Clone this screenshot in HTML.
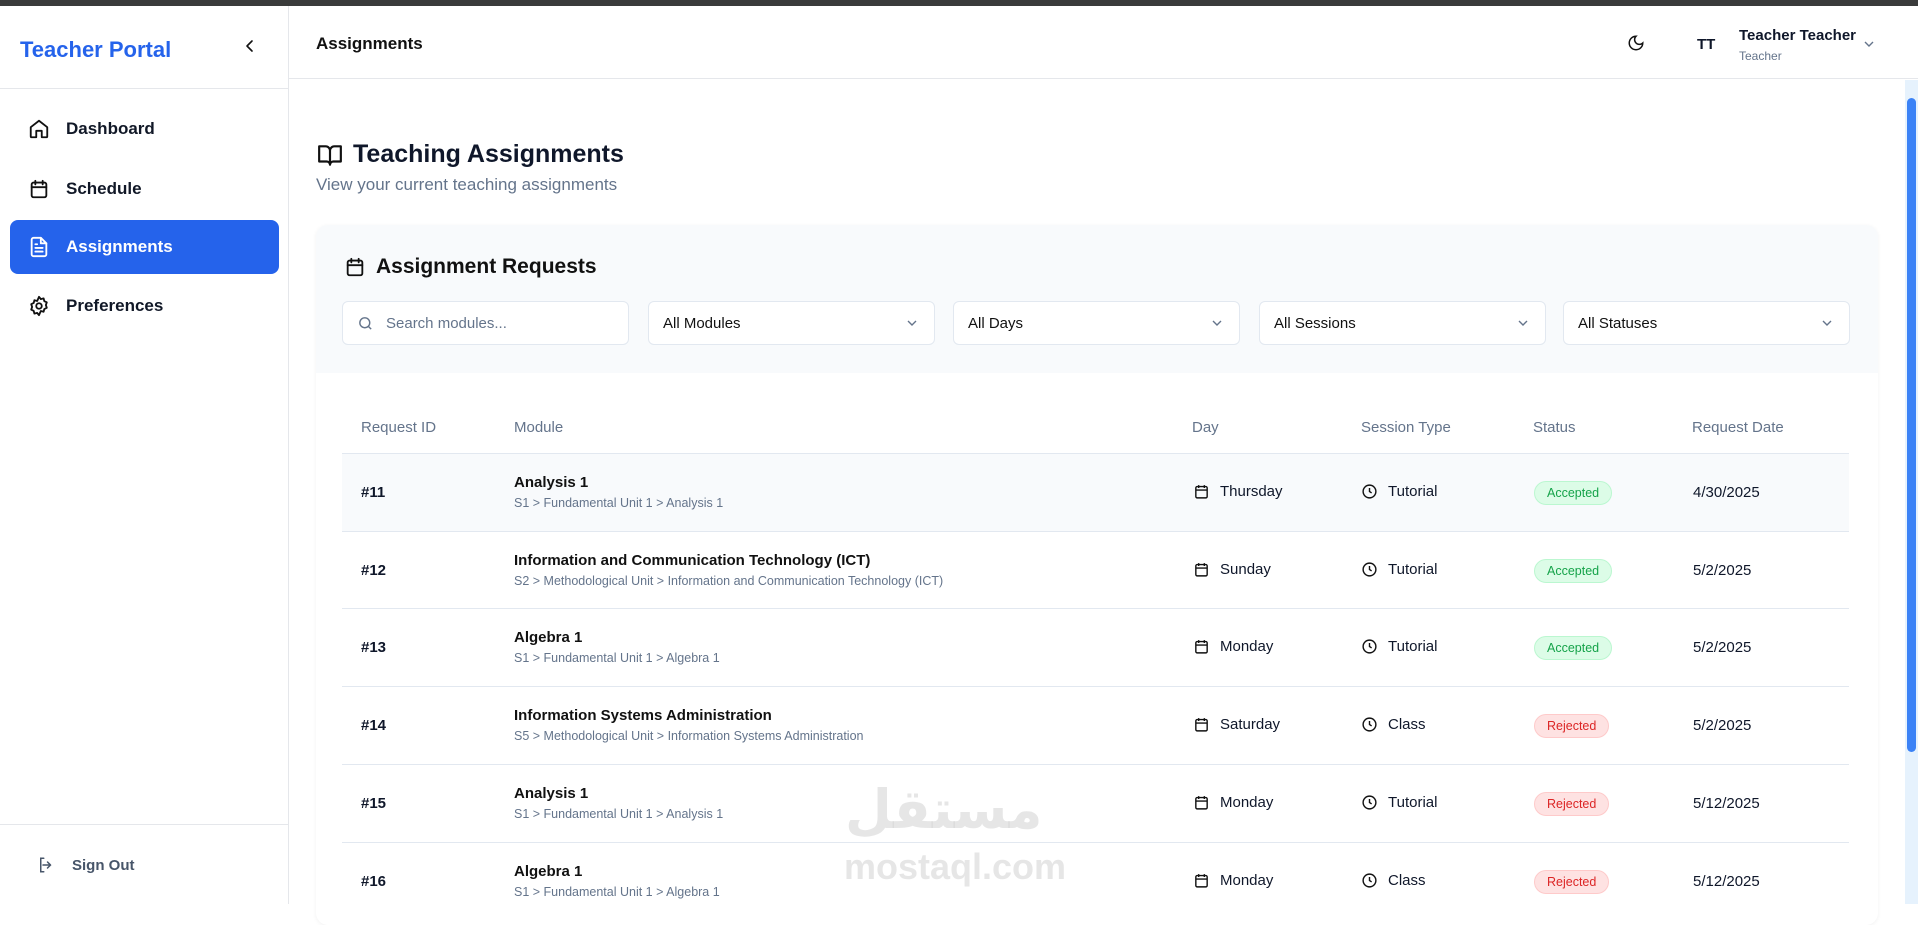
<!DOCTYPE html>
<html><head><meta charset="utf-8">
<style>
*{box-sizing:border-box;margin:0;padding:0}
body{width:1918px;height:904px;overflow:hidden;font-family:"Liberation Sans",sans-serif;color:#0f172a;background:#fff;position:relative}
.topbar{position:absolute;left:0;top:0;width:1918px;height:6px;background:#3a3b3b}
.side{position:absolute;left:0;top:6px;width:289px;height:898px;border-right:1px solid #e5e7eb;background:#fff}
.logo{position:absolute;left:20px;top:31px;font-size:22px;font-weight:bold;color:#2563eb}
.collapse{position:absolute;left:243px;top:33px}
.sideb{position:absolute;left:0;top:82px;width:288px;border-top:1px solid #e5e7eb}
.nav{position:absolute;left:10px;width:269px;height:54px;border-radius:8px;display:flex;align-items:center;padding-left:18px;font-size:17px;font-weight:bold;color:#111827}
.nav svg{margin-right:16px}
.nav.active{background:#2563eb;color:#fff}
.signb{position:absolute;left:0;top:818px;width:288px;border-top:1px solid #e5e7eb}
.signout{position:absolute;left:37px;top:850px;font-size:15px;font-weight:bold;color:#475569;display:flex;align-items:center}
.header{position:absolute;left:289px;top:6px;width:1629px;height:73px;border-bottom:1px solid #e5e7eb}
.htitle{position:absolute;left:27px;top:28px;font-size:17px;font-weight:bold;color:#111}
.scroll{position:absolute;left:1905px;top:80px;width:13px;height:824px;background:#e6f2fd}
.thumb{position:absolute;left:2px;top:18px;width:9px;height:654px;background:#3b82f6;border-radius:5px}
.title{position:absolute;left:317px;top:140px;font-size:25px;font-weight:bold;display:flex;align-items:center}
.title svg{margin-right:10px}
.sub{position:absolute;left:316px;top:175px;font-size:17px;color:#64748b}
.card{position:absolute;left:316px;top:225px;width:1562px;height:700px;background:#fff;border-radius:12px;box-shadow:0 1px 4px rgba(0,0,0,.06)}
.chead{position:absolute;left:0;top:0;width:100%;height:148px;background:#f8fafc;border-radius:12px 12px 0 0}
.ctitle{position:absolute;left:28px;top:30px;font-size:21px;font-weight:bold;display:flex;align-items:center;color:#111}
.ctitle svg{margin-right:10px}
.f{position:absolute;top:76px;height:44px;width:287px;background:#fff;border:1px solid #e2e8f0;border-radius:6px;font-size:15px;display:flex;align-items:center;padding-left:14px;color:#111}
.f .chev{position:absolute;right:16px;top:15px}
.th{position:absolute;top:194px;font-size:15px;color:#64748b}
.row{position:absolute;left:26px;width:1507px;height:78px;border-top:1px solid #e2e8f0}
.row div{position:absolute}
.id{left:19px;top:30px;font-size:15px;font-weight:bold}
.mt{left:172px;top:20px;font-size:15px;font-weight:bold;color:#111}
.ms{left:172px;top:42px;font-size:12.5px;color:#64748b}
.day{left:851px;top:29px;font-size:15px;display:flex;align-items:center}
.ses{left:1019px;top:29px;font-size:15px;display:flex;align-items:center}
.day svg,.ses svg{margin-right:10px}
.badge{left:1192px;top:27px;height:24px;padding:0 12px;border-radius:12px;font-size:12.5px;line-height:22px}
.acc{background:#dcfce7;border:1px solid #bbf7d0;color:#16a34a}
.rej{background:#fee2e2;border:1px solid #fecaca;color:#dc2626}
.date{left:1351px;top:30px;font-size:15px}
.wm{position:absolute;left:844px;top:846px;font-size:36px;font-weight:bold;color:rgba(200,200,200,.45)}
.wma{position:absolute;left:845px;top:778px;font-size:54px;font-weight:bold;color:rgba(200,200,200,.45);font-family:"DejaVu Sans",sans-serif}
</style></head><body>
<div class="topbar"></div>
<div class="side">
 <div class="logo">Teacher Portal</div>
 <svg class="collapse" width="14" height="14" viewBox="0 0 14 14"><path d="M9 2L4 7l5 5" fill="none" stroke="#111" stroke-width="1.6" stroke-linecap="round" stroke-linejoin="round"/></svg>
 <div class="sideb"></div>
 <div class="nav" style="top:96px"><svg width="22" height="22" viewBox="0 0 24 24" fill="none" stroke="#111" stroke-width="2" stroke-linecap="round" stroke-linejoin="round"><path d="M3 10l9-7 9 7v10a1 1 0 0 1-1 1h-5v-7H9v7H4a1 1 0 0 1-1-1z"/></svg>Dashboard</div>
 <div class="nav" style="top:156px"><svg width="22" height="22" viewBox="0 0 24 24" fill="none" stroke="#111" stroke-width="2" stroke-linecap="round"><rect x="4" y="5" width="16" height="16" rx="2"/><path d="M8 3v4M16 3v4M4 10h16"/></svg>Schedule</div>
 <div class="nav active" style="top:214px"><svg width="22" height="22" viewBox="0 0 24 24" fill="none" stroke="#fff" stroke-width="2" stroke-linecap="round" stroke-linejoin="round"><path d="M14 2H6a2 2 0 0 0-2 2v16a2 2 0 0 0 2 2h12a2 2 0 0 0 2-2V8z"/><path d="M14 2v6h6M8 13h8M8 17h8M8 9h2"/></svg>Assignments</div>
 <div class="nav" style="top:273px"><svg width="22" height="22" viewBox="0 0 24 24" fill="none" stroke="#111" stroke-width="2"><circle cx="12" cy="12" r="3"/><path d="M12 2l2 2.5 3-.8.8 3L20.5 8l-1 3 1 3-2.7 1.3-.8 3-3-.8L12 22l-2-2.5-3 .8-.8-3L3.5 16l1-3-1-3 2.7-1.3.8-3 3 .8z" stroke-linejoin="round"/></svg>Preferences</div>
 <div class="signb"></div>
 <div class="signout"><svg width="18" height="18" viewBox="0 0 24 24" fill="none" stroke="#475569" stroke-width="2" stroke-linecap="round"><path d="M9 21H5V3h4M14 8l4 4-4 4M18 12H8"/></svg><span style="margin-left:17px">Sign Out</span></div>
</div>
<div class="header">
 <div class="htitle">Assignments</div>
 <svg style="position:absolute;left:1338px;top:28px" width="18" height="18" viewBox="0 0 24 24" fill="none" stroke="#111" stroke-width="2"><path d="M12 3a6 6 0 0 0 9 9 9 9 0 1 1-9-9z"/></svg>
 <div style="position:absolute;left:1408px;top:30px;font-size:15px;font-weight:bold">TT</div>
 <div style="position:absolute;left:1450px;top:21px;font-size:15px;font-weight:bold">Teacher Teacher</div>
 <div style="position:absolute;left:1450px;top:43px;font-size:12px;color:#64748b">Teacher</div>
 <svg style="position:absolute;left:1574px;top:32px" width="12" height="12" viewBox="0 0 12 12"><path d="M2 4l4 4 4-4" fill="none" stroke="#64748b" stroke-width="1.4"/></svg>
</div>
<div class="scroll"><div class="thumb"></div></div>
<div class="title"><svg width="26" height="26" viewBox="0 0 24 24" fill="none" stroke="#111" stroke-width="2" stroke-linejoin="round"><path d="M2 4h6a4 4 0 0 1 4 4v13a3 3 0 0 0-3-3H2zM22 4h-6a4 4 0 0 0-4 4v13a3 3 0 0 1 3-3h7z"/></svg>Teaching Assignments</div>
<div class="sub">View your current teaching assignments</div>
<div class="card">
 <div class="chead"></div>
 <div class="ctitle"><svg width="22" height="22" viewBox="0 0 24 24" fill="none" stroke="#111" stroke-width="2" stroke-linecap="round"><rect x="4" y="5" width="16" height="16" rx="2"/><path d="M8 3v4M16 3v4M4 10h16"/></svg>Assignment Requests</div>
 <div class="f" style="left:26px;color:#64748b"><svg width="17" height="17" viewBox="0 0 24 24" fill="none" stroke="#64748b" stroke-width="2"><circle cx="11" cy="11" r="7"/><path d="M20 20l-4-4"/></svg><span style="margin-left:12px">Search modules...</span></div>
 <div class="f" style="left:332px">All Modules<svg class="chev" width="12" height="12" viewBox="0 0 12 12"><path d="M2 4l4 4 4-4" fill="none" stroke="#64748b" stroke-width="1.4"/></svg></div>
 <div class="f" style="left:637px">All Days<svg class="chev" width="12" height="12" viewBox="0 0 12 12"><path d="M2 4l4 4 4-4" fill="none" stroke="#64748b" stroke-width="1.4"/></svg></div>
 <div class="f" style="left:943px">All Sessions<svg class="chev" width="12" height="12" viewBox="0 0 12 12"><path d="M2 4l4 4 4-4" fill="none" stroke="#64748b" stroke-width="1.4"/></svg></div>
 <div class="f" style="left:1247px">All Statuses<svg class="chev" width="12" height="12" viewBox="0 0 12 12"><path d="M2 4l4 4 4-4" fill="none" stroke="#64748b" stroke-width="1.4"/></svg></div>
 <div class="th" style="left:45px">Request ID</div>
 <div class="th" style="left:198px">Module</div>
 <div class="th" style="left:876px">Day</div>
 <div class="th" style="left:1045px">Session Type</div>
 <div class="th" style="left:1217px">Status</div>
 <div class="th" style="left:1376px">Request Date</div>
</div>
<div id="rows" style="position:absolute;left:316px;top:453px;width:1562px">
 <div class="row" style="top:0;background:#f8fafc"><div class="id">#11</div><div class="mt">Analysis 1</div><div class="ms">S1 &gt; Fundamental Unit 1 &gt; Analysis 1</div>
  <div class="day"><svg width="17" height="17" viewBox="0 0 24 24" fill="none" stroke="#111" stroke-width="2"><rect x="4" y="5" width="16" height="16" rx="2"/><path d="M8 3v4M16 3v4M4 10h16"/></svg>Thursday</div>
  <div class="ses"><svg width="17" height="17" viewBox="0 0 24 24" fill="none" stroke="#111" stroke-width="2"><circle cx="12" cy="12" r="9"/><path d="M12 7v5l3 2"/></svg>Tutorial</div>
  <div class="badge acc">Accepted</div><div class="date">4/30/2025</div></div>
 <div class="row" style="top:78px"><div class="id">#12</div><div class="mt">Information and Communication Technology (ICT)</div><div class="ms">S2 &gt; Methodological Unit &gt; Information and Communication Technology (ICT)</div>
  <div class="day"><svg width="17" height="17" viewBox="0 0 24 24" fill="none" stroke="#111" stroke-width="2"><rect x="4" y="5" width="16" height="16" rx="2"/><path d="M8 3v4M16 3v4M4 10h16"/></svg>Sunday</div>
  <div class="ses"><svg width="17" height="17" viewBox="0 0 24 24" fill="none" stroke="#111" stroke-width="2"><circle cx="12" cy="12" r="9"/><path d="M12 7v5l3 2"/></svg>Tutorial</div>
  <div class="badge acc">Accepted</div><div class="date">5/2/2025</div></div>
 <div class="row" style="top:155px"><div class="id">#13</div><div class="mt">Algebra 1</div><div class="ms">S1 &gt; Fundamental Unit 1 &gt; Algebra 1</div>
  <div class="day"><svg width="17" height="17" viewBox="0 0 24 24" fill="none" stroke="#111" stroke-width="2"><rect x="4" y="5" width="16" height="16" rx="2"/><path d="M8 3v4M16 3v4M4 10h16"/></svg>Monday</div>
  <div class="ses"><svg width="17" height="17" viewBox="0 0 24 24" fill="none" stroke="#111" stroke-width="2"><circle cx="12" cy="12" r="9"/><path d="M12 7v5l3 2"/></svg>Tutorial</div>
  <div class="badge acc">Accepted</div><div class="date">5/2/2025</div></div>
 <div class="row" style="top:233px"><div class="id">#14</div><div class="mt">Information Systems Administration</div><div class="ms">S5 &gt; Methodological Unit &gt; Information Systems Administration</div>
  <div class="day"><svg width="17" height="17" viewBox="0 0 24 24" fill="none" stroke="#111" stroke-width="2"><rect x="4" y="5" width="16" height="16" rx="2"/><path d="M8 3v4M16 3v4M4 10h16"/></svg>Saturday</div>
  <div class="ses"><svg width="17" height="17" viewBox="0 0 24 24" fill="none" stroke="#111" stroke-width="2"><circle cx="12" cy="12" r="9"/><path d="M12 7v5l3 2"/></svg>Class</div>
  <div class="badge rej">Rejected</div><div class="date">5/2/2025</div></div>
 <div class="row" style="top:311px"><div class="id">#15</div><div class="mt">Analysis 1</div><div class="ms">S1 &gt; Fundamental Unit 1 &gt; Analysis 1</div>
  <div class="day"><svg width="17" height="17" viewBox="0 0 24 24" fill="none" stroke="#111" stroke-width="2"><rect x="4" y="5" width="16" height="16" rx="2"/><path d="M8 3v4M16 3v4M4 10h16"/></svg>Monday</div>
  <div class="ses"><svg width="17" height="17" viewBox="0 0 24 24" fill="none" stroke="#111" stroke-width="2"><circle cx="12" cy="12" r="9"/><path d="M12 7v5l3 2"/></svg>Tutorial</div>
  <div class="badge rej">Rejected</div><div class="date">5/12/2025</div></div>
 <div class="row" style="top:389px"><div class="id">#16</div><div class="mt">Algebra 1</div><div class="ms">S1 &gt; Fundamental Unit 1 &gt; Algebra 1</div>
  <div class="day"><svg width="17" height="17" viewBox="0 0 24 24" fill="none" stroke="#111" stroke-width="2"><rect x="4" y="5" width="16" height="16" rx="2"/><path d="M8 3v4M16 3v4M4 10h16"/></svg>Monday</div>
  <div class="ses"><svg width="17" height="17" viewBox="0 0 24 24" fill="none" stroke="#111" stroke-width="2"><circle cx="12" cy="12" r="9"/><path d="M12 7v5l3 2"/></svg>Class</div>
  <div class="badge rej">Rejected</div><div class="date">5/12/2025</div></div>
</div>
<div class="wma">مستقل</div>
<div class="wm">mostaql.com</div>
</body></html>
